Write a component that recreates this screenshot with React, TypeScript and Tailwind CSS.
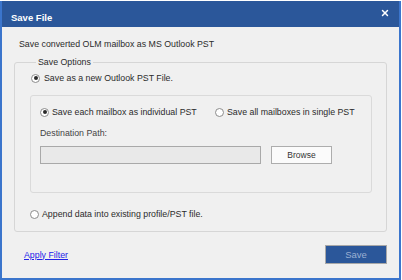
import { X } from "lucide-react"

function Radio({ checked = false }: { checked?: boolean }) {
  return (
    <span className="w-[9px] h-[9px] rounded-full border border-[#8c8c8c] bg-white flex items-center justify-center shrink-0">
      {checked && <span className="w-[4px] h-[4px] rounded-full bg-[#2a2a2a]" />}
    </span>
  )
}

export default function App() {
  return (
    <div
      className="w-[402px] h-[280px] bg-white pt-px pr-[1px] text-[8.8px] text-[#2b2b2b] leading-[12px]"
      style={{ fontFamily: '"Liberation Sans", Arial, sans-serif' }}
    >
      <div className="h-[279px] flex flex-col border-x-2 border-b-2 border-[#3b75cc] bg-[#f0f0f0]">
        {/* title bar */}
        <div className="h-[26px] bg-[#2b579a] flex items-start justify-between pl-[9px] pr-[9px] shrink-0">
          <span className="mt-[11px] text-white font-bold text-[9.5px]">Save File</span>
          <X className="mt-[7px] text-white" size={10} strokeWidth={3.5} />
        </div>

        <div className="flex-1 flex flex-col pl-[12px] pr-[12px]">
          <div className="mt-[11px] ml-[5px] h-[12px]">Save converted OLM mailbox as MS Outlook PST</div>

          <fieldset className="mt-[6px] border border-[#d6d6d6] rounded-[3px] pl-[15px] pr-[14px] pb-[11px]">
            <legend className="ml-[6px] px-[2px] h-[12px]">Save Options</legend>

            <div className="mt-[4px] h-[12px] flex items-center gap-[4px] ml-[1px]">
              <Radio checked />
              <span>Save as a new Outlook PST File.</span>
            </div>

            <div className="mt-[11px] h-[98px] border border-[#dadada] rounded-[3px] pl-[9px] pr-[9px]">
              <div className="mt-[10px] h-[12px] flex items-center">
                <div className="flex items-center gap-[3px] w-[175px]">
                  <Radio checked />
                  <span>Save each mailbox as individual PST</span>
                </div>
                <div className="flex items-center gap-[3px]">
                  <Radio />
                  <span>Save all mailboxes in single PST</span>
                </div>
              </div>
              <div className="mt-[9px] h-[12px] text-[#444]">Destination Path:</div>
              <div className="mt-[7px] flex gap-[10px]">
                <div className="w-[221px] h-[18px] bg-[#e9e9e9] border border-[#a9a9a9]" />
                <button className="w-[61px] h-[18px] bg-[#fbfbfb] border border-[#adadad] text-[8.5px] text-[#333]">
                  Browse
                </button>
              </div>
            </div>

            <div className="mt-[15px] h-[12px] flex items-center gap-[3px]">
              <Radio />
              <span>Append data into existing profile/PST file.</span>
            </div>
          </fieldset>

          <div className="mt-[13px] flex items-center justify-between">
            <a href="#" className="ml-[10px] text-[#2323e8] underline">Apply Filter</a>
            <button className="w-[62px] h-[19px] bg-[#2b579a] border border-[#a8a8a8] text-[#9bb0d2] text-[9.5px]">
              Save
            </button>
          </div>
        </div>
      </div>
    </div>
  )
}
